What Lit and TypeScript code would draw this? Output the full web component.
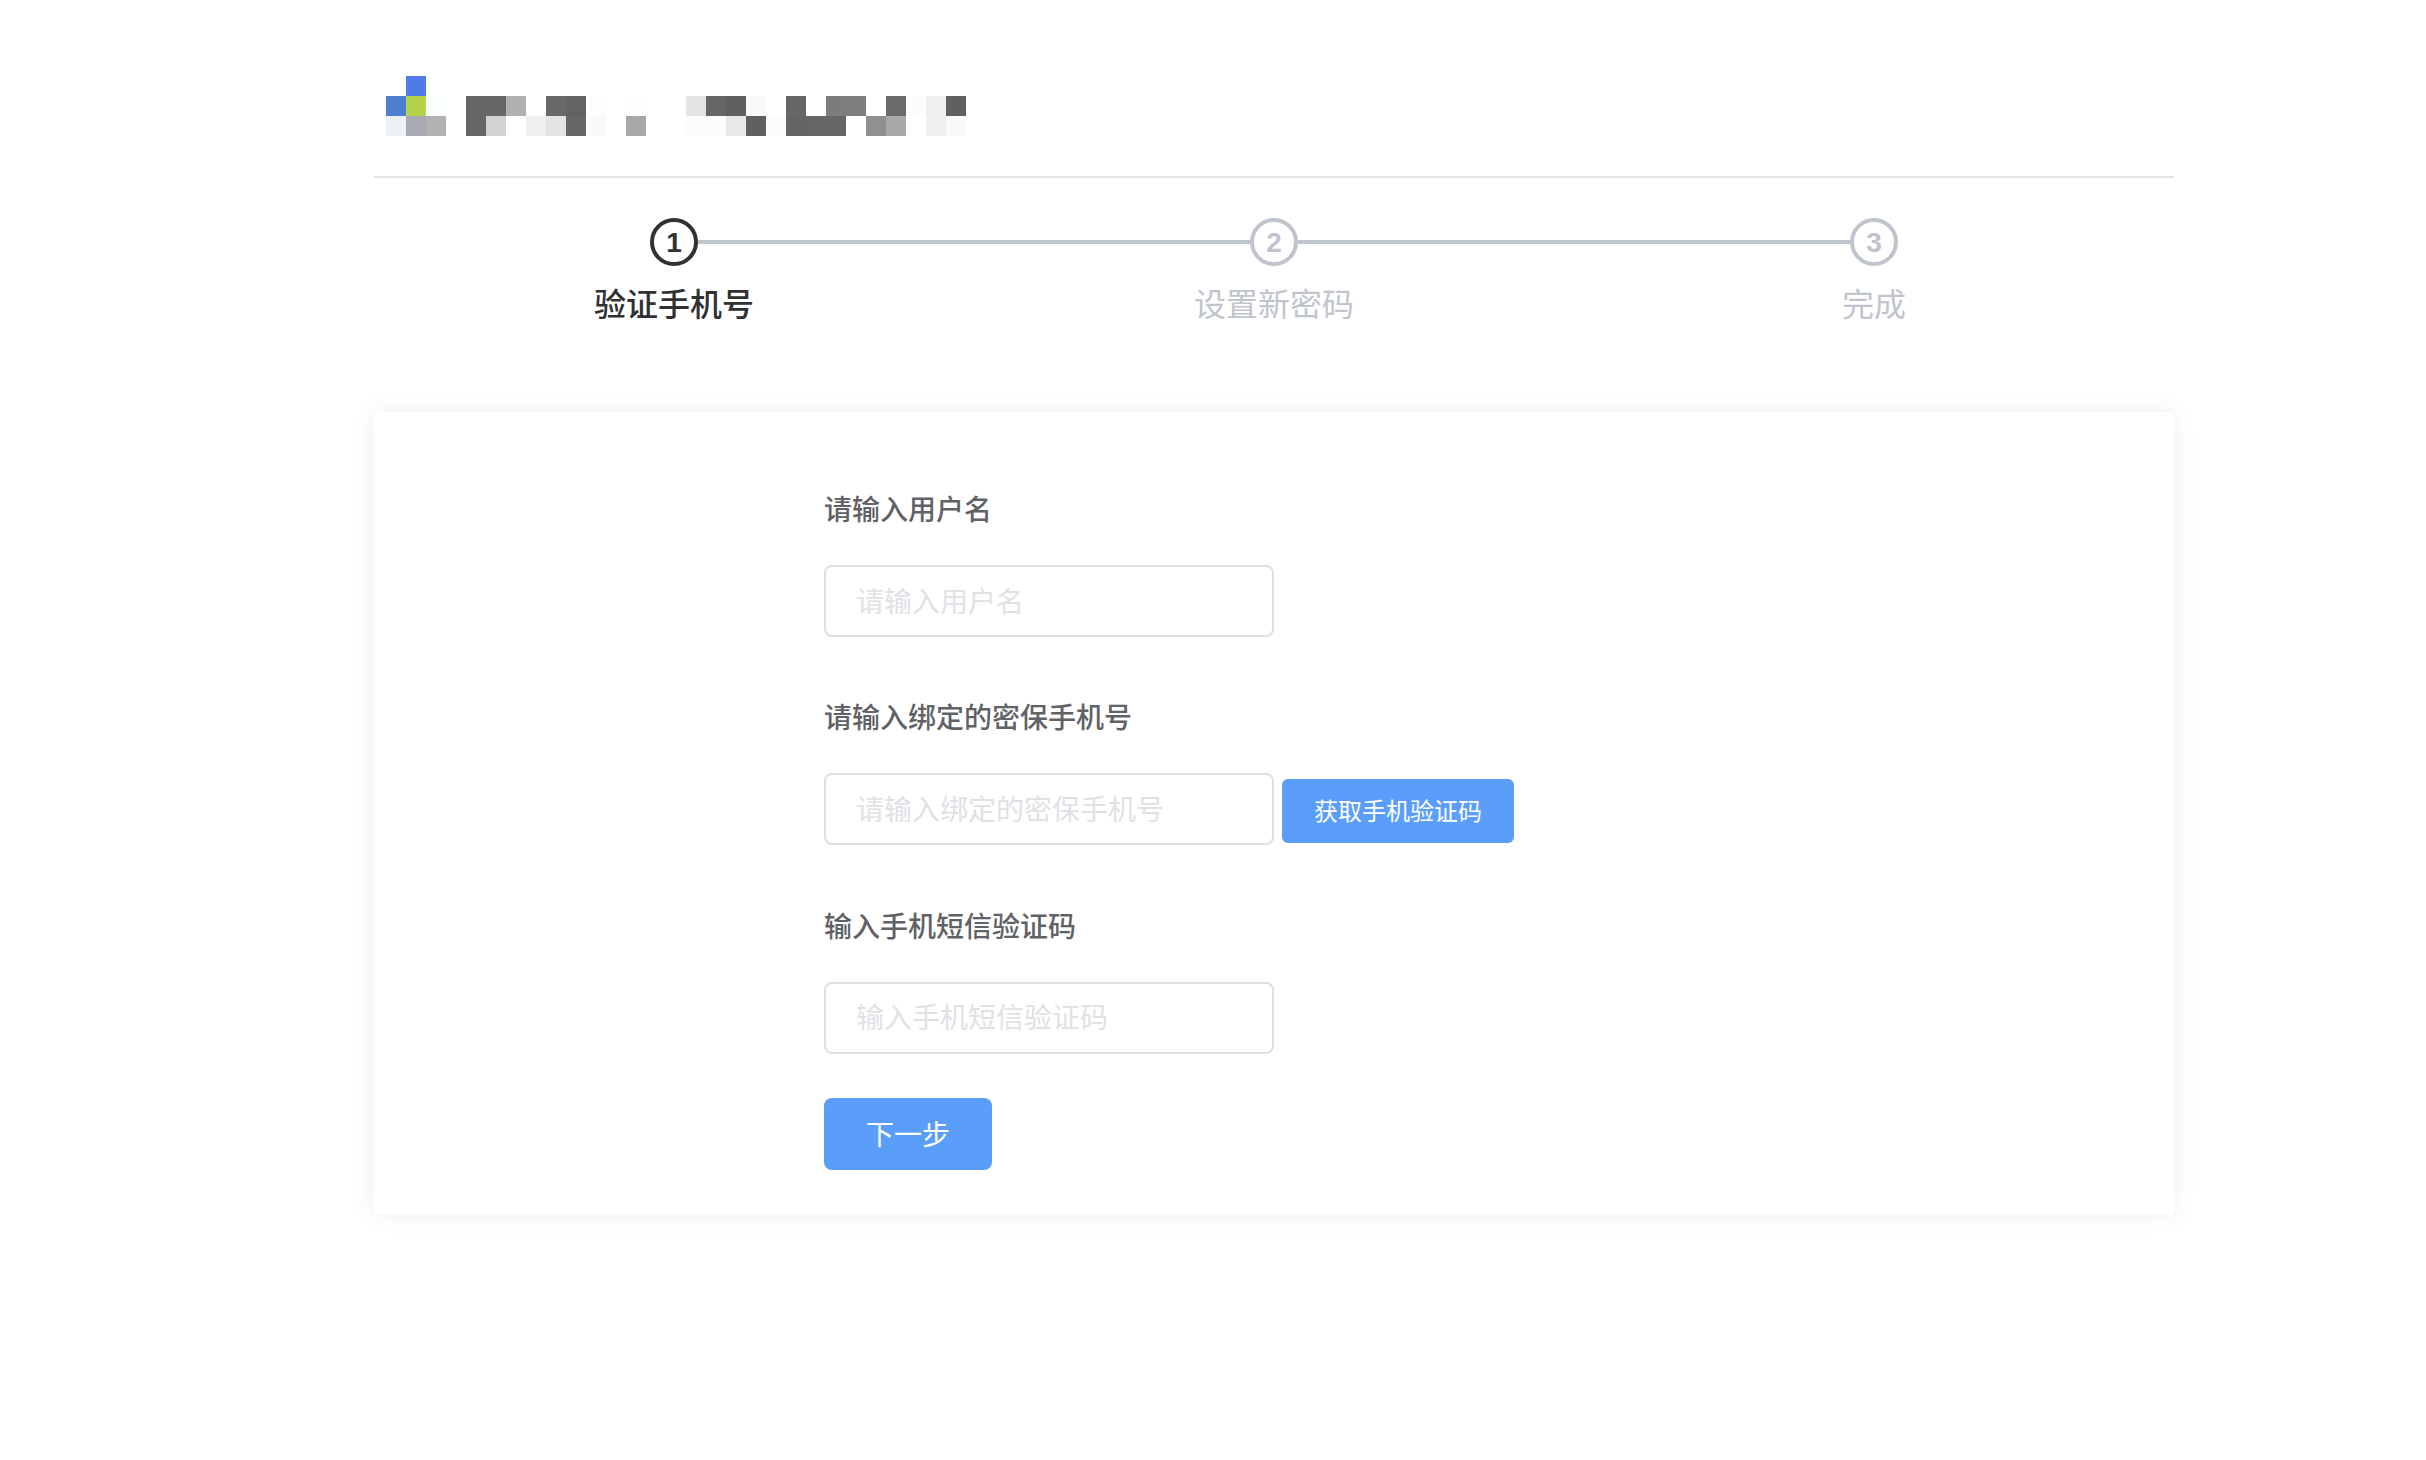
import { LitElement, html, css } from "lit";
import { customElement } from "lit/decorators.js";

type Cell = [number, number, string];
const LOGO: Cell[] = [
  [0, 1, "#4f7be6"],
  [1, 0, "#4f7fd0"], [1, 1, "#b5d34a"], [1, 2, "#fbfeff"], [1, 4, "#666666"], [1, 5, "#666666"], [1, 6, "#b0b0b0"],
  [1, 8, "#696969"], [1, 9, "#636363"], [1, 10, "#fdfdfd"], [1, 12, "#fdfdfd"], [1, 15, "#e4e4e4"], [1, 16, "#666666"],
  [1, 17, "#606060"], [1, 18, "#fafafa"], [1, 20, "#666666"], [1, 22, "#7c7c7c"], [1, 23, "#7e7e7e"], [1, 25, "#6b6b6b"],
  [1, 26, "#fcfcfc"], [1, 27, "#f0f0f0"], [1, 28, "#606060"],
  [2, 0, "#ecf0f4"], [2, 1, "#a8a9b3"], [2, 2, "#b3b2b0"], [2, 4, "#666666"], [2, 5, "#d2d2d2"], [2, 7, "#f0f0f0"],
  [2, 8, "#e4e4e4"], [2, 9, "#666666"], [2, 10, "#fafafa"], [2, 12, "#a8a8a8"], [2, 15, "#fcfcfc"], [2, 16, "#fcfcfc"],
  [2, 17, "#e8e8e8"], [2, 18, "#606060"], [2, 19, "#fcfcfc"], [2, 20, "#646464"], [2, 21, "#666666"], [2, 22, "#666666"],
  [2, 24, "#909090"], [2, 25, "#a8a8a8"], [2, 27, "#f0f0f0"], [2, 28, "#fafafa"],
];

const STEPS = ["验证手机号", "设置新密码", "完成"];
const FIELDS = [
  { label: "请输入用户名", action: "" },
  { label: "请输入绑定的密保手机号", action: "获取手机验证码" },
  { label: "输入手机短信验证码", action: "" },
];

@customElement("app-root")
export class AppRoot extends LitElement {
  static styles = css`
    :host {
      display: block;
      min-height: 1460px;
      background: #fff;
      font-family: "Noto Sans CJK SC", "Liberation Sans", sans-serif;
    }
    .page {
      width: 1800px;
      margin-left: 374px;
    }
    .header {
      padding: 76px 0 40px 12px;
      border-bottom: 2px solid #e4e4e4;
    }
    .logo {
      display: grid;
      grid-template-columns: repeat(29, 20px);
      grid-template-rows: repeat(3, 20px);
      width: max-content;
    }
    .steps {
      display: grid;
      grid-template-columns: repeat(3, 600px);
      padding-top: 40px;
    }
    .step {
      position: relative;
      display: flex;
      flex-direction: column;
      align-items: center;
      color: #c0c4cc;
    }
    .step.active {
      color: #303133;
    }
    .step:not(:last-child)::after {
      content: "";
      position: absolute;
      left: calc(50% + 24px);
      width: 552px;
      top: 22px;
      height: 4px;
      background: #c0c4cc;
    }
    .circle {
      box-sizing: border-box;
      width: 48px;
      height: 48px;
      padding-top: 2px;
      border: 4px solid currentColor;
      border-radius: 50%;
      display: flex;
      align-items: center;
      justify-content: center;
      font-family: "Liberation Sans", sans-serif;
      font-size: 28px;
      font-weight: 700;
    }
    .step-title {
      margin-top: 14px;
      font-size: 32px;
      line-height: 44px;
    }
    .step.active .step-title {
      font-weight: 500;
    }
    .card {
      margin-top: 88px;
      height: 802px;
      box-sizing: border-box;
      padding: 69px 0 0 450px;
      background: #fff;
      box-shadow: 0 0 24px rgba(0, 0, 0, 0.07);
    }
    .label {
      height: 56px;
      line-height: 54px;
      font-size: 28px;
      font-weight: 500;
      color: #606266;
    }
    .field {
      margin-bottom: 52.4px;
    }
    .row {
      display: flex;
      align-items: center;
      gap: 8px;
      margin-top: 28px;
    }
    input {
      box-sizing: border-box;
      width: 450px;
      height: 72px;
      padding: 0 30px 3px;
      border: 2px solid #dcdfe6;
      border-radius: 8px;
      outline: none;
      background: #fff;
      font: inherit;
      font-size: 28px;
      color: #606266;
    }
    input::placeholder {
      color: #dfe1e6;
      opacity: 1;
    }
    button {
      border: 0;
      background: #5a9ef9;
      color: #fff;
      font: inherit;
      padding: 0 0 2px;
    }
    .code {
      width: 232px;
      height: 64px;
      margin-top: 4px;
      padding-bottom: 4px;
      border-radius: 6px;
      font-size: 24px;
    }
    .next {
      display: block;
      margin-top: -8px;
      width: 168px;
      height: 72px;
      border-radius: 8px;
      font-size: 28px;
    }
  `;

  render() {
    return html`
      <div class="page">
        <header class="header">
          <div class="logo">
            ${LOGO.map(
              ([r, c, color]) =>
                html`<span style="grid-row:${r + 1};grid-column:${c + 1};background:${color}"></span>`
            )}
          </div>
        </header>
        <div class="steps">
          ${STEPS.map(
            (s, i) => html`
              <div class="step ${i === 0 ? "active" : ""}">
                <div class="circle">${i + 1}</div>
                <div class="step-title">${s}</div>
              </div>
            `
          )}
        </div>
        <main class="card">
          ${FIELDS.map(
            (f) => html`
              <div class="field">
                <div class="label">${f.label}</div>
                <div class="row">
                  <input placeholder=${f.label} />
                  ${f.action ? html`<button class="code">${f.action}</button>` : ""}
                </div>
              </div>
            `
          )}
          <button class="next">下一步</button>
        </main>
      </div>
    `;
  }
}
